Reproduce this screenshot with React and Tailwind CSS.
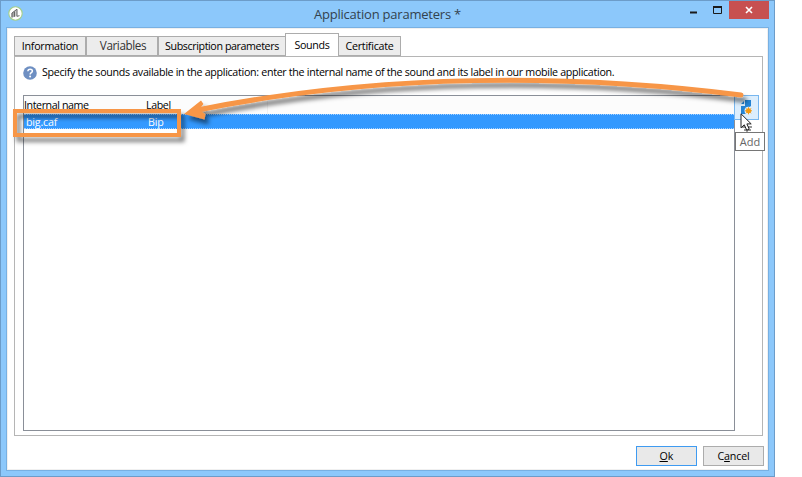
const tabs = [
  { label: 'Information', cls: 'w-[72px] h-[20px] bg-[#ececec] text-[10.7px] tracking-[-0.27px]' },
  { label: 'Variables', cls: 'w-[72px] h-[20px] bg-[#ececec] pl-[2px] text-[11.7px] text-[#333] tracking-[-0.4px]' },
  { label: 'Subscription parameters', cls: 'w-[128px] h-[20px] bg-[#ececec] text-[10.7px] tracking-[-0.4px]' },
  { label: 'Sounds', cls: 'relative w-[54px] h-[23px] -ml-px bg-white text-[10.7px] border-b-0! pt-px tracking-[-0.3px]' },
  { label: 'Certificate', cls: 'w-[63px] h-[20px] -ml-px bg-[#ececec] text-[10.7px] tracking-[-0.25px]' },
];

function TitleBar() {
  return (
    <header className="flex h-[26px] shrink-0 items-start pl-[7px]">
      <svg className="mt-[5px] shrink-0" width="15" height="15" viewBox="0 0 15 15">
        <circle cx="7.5" cy="7.5" r="6.7" fill="#fff" stroke="#a4cf8a" strokeWidth="1.1" />
        <path d="M3.5 7.2 6 5.5v5.6l-2.5.5z" fill="#aaa" />
        <path d="M6.1 5.3 9 3v7.5H6.2z" fill="#ccc" />
        <path d="M4 11.5V7L9 3.2v7.1l2.5-.6M6.5 5.5v5.3" fill="none" stroke="#666" strokeWidth="1" />
      </svg>
      <h1 className="flex-1 pl-[291px] pt-[3px] text-[13px] leading-[20px] tracking-[-0.22px] text-[#33424e]">Application parameters *</h1>
      <svg className="shrink-0" width="46" height="18" viewBox="0 0 46 18">
        <path d="M7 10.5h7v2H7z" fill="#1b1b1b" />
        <path d="M30.5 6h8v6.5h-8z" fill="none" stroke="#1b1b1b" />
        <path d="M30 5h9v2h-9z" fill="#1b1b1b" />
      </svg>
      <button className="mr-[5px] flex h-[18px] w-[40px] items-center justify-center bg-[#c75050]">
        <svg width="8" height="8" viewBox="0 0 8 8"><path d="M1 1l6 6M7 1L1 7" stroke="#fff" strokeWidth="1.6" /></svg>
      </button>
    </header>
  );
}

function Annotation() {
  return (
    <svg className="pointer-events-none absolute left-0 top-0" width="802" height="477" viewBox="0 0 802 477">
      <defs>
        <filter id="soft" x="-10%" y="-30%" width="120%" height="180%">
          <feDropShadow dx="3.5" dy="5" stdDeviation="2" floodColor="#000" floodOpacity=".5" />
        </filter>
      </defs>
      <g filter="url(#soft)">
        <path d="M15 111h164v24H15z" fill="none" stroke="#f79646" strokeWidth="4" />
      </g>
      <g filter="url(#soft)">
        <path d="M741 95C570 73.5 380 73 195 110.5" fill="none" stroke="#f79646" strokeWidth="5" strokeLinecap="round" />
        <path d="M184 114 201 100.5 203.5 104 199 109.5 205.5 114.5 204.5 119.5z" fill="#f79646" />
      </g>
    </svg>
  );
}

export default function App() {
  return (
    <div className="relative h-[477px] w-[802px] overflow-hidden bg-white font-['Open_Sans','Noto_Sans',sans-serif] text-[10.7px] text-black">
      <div className="flex h-[477px] w-[775px] flex-col border border-[#6c9cc9] bg-[#8cc8fb]">
        <TitleBar />
        <main className="mx-[5px] mb-[5px] flex flex-1 flex-col border border-[#78b0e2] bg-[#f0f0f0] p-px">
          <div className="flex flex-1 flex-col bg-white pl-[6px] pr-[3px] pt-[5px]">
            <nav className="flex h-[22px] items-end">
              {tabs.map((t) => (
                <div key={t.label} className={'z-10 flex shrink-0 items-center justify-center whitespace-nowrap border border-[#acacac] leading-none ' + t.cls}>{t.label}</div>
              ))}
            </nav>
            <section className="flex h-[380px] w-[749px] flex-col border border-[#b5b5b5] pl-[8px]">
              <div className="flex h-[38px] items-start pt-[9px]">
                <svg width="14" height="14" viewBox="0 0 14 14" className="shrink-0">
                  <circle cx="7" cy="7" r="6.8" fill="#6e8fc2" />
                  <path d="M4.9 5.3c0-3 4.5-2.7 4.5-.2 0 1.6-2.2 1.6-2.2 3.3" fill="none" stroke="#fff" strokeWidth="1.5" />
                  <circle cx="7.1" cy="10.6" r="1" fill="#fff" />
                </svg>
                <p className="ml-[5px] whitespace-nowrap leading-[13px] tracking-[-0.31px]">Specify the sounds available in the application: enter the internal name of the sound and its label in our mobile application.</p>
              </div>
              <div className="flex">
                <div className="h-[336px] w-[712px] border border-[#8a8f98]">
                  <div className="flex h-[18px] bg-[#fcfcfc] leading-[19px] tracking-[-0.42px]">
                    <span className="w-[122px]">Internal name</span>
                    <span className="w-[122px] border-r border-[#f0f0f0]">Label</span>
                  </div>
                  <div className="flex h-[15px] border-y border-dotted border-[#a5d1ff] bg-[#3399ff] pl-[2px] leading-[15px] tracking-[-0.2px] text-white">
                    <span className="w-[122px]">big.caf</span>
                    <span>Bip</span>
                  </div>
                </div>
                <button className="-ml-px flex h-[25px] w-[25px] items-start justify-center border border-[#78b7ef] bg-[#dceefd] pt-[4px]">
                  <svg width="14" height="15" viewBox="0 0 14 15">
                    <path d="M1 4 4 1v3zM5 0h6v6L8 8v6H1V6h4z" fill="#2484d5" />
                    <circle cx="8.5" cy="10.8" r="4" fill="#dceefd" />
                    <path d="M8.5 7.3v7M5 10.8h7M6 8.3l5 5M11 8.3l-5 5" stroke="#f49a12" strokeWidth="1" />
                    <circle cx="8.5" cy="10.8" r="2.5" fill="#f49a12" />
                  </svg>
                </button>
              </div>
            </section>
            <footer className="mt-[10px] flex justify-end gap-[6px]">
              <button className="h-[20px] w-[61px] border border-[#3f9bf1] bg-[#e9e9e9] leading-[18px]"><u>O</u>k</button>
              <button className="h-[20px] w-[61px] border border-[#acacac] bg-[#e9e9e9] leading-[18px] tracking-[-0.2px]">C<u>a</u>ncel</button>
            </footer>
          </div>
        </main>
      </div>
      <Annotation />
      <svg className="absolute left-[740px] top-[113px]" width="14" height="20" viewBox="0 0 14 20">
        <path d="M2 14h10M4 17h7M7 14v5" stroke="#777" strokeWidth="1.3" />
        <path d="M1 .8v14l3.3-3 2.4 5.4 2.5-1.1-2.3-5.2h4.3z" fill="#fff" stroke="#222" />
      </svg>
      <div className="absolute left-[735px] top-[132px] flex h-[19px] w-[30px] items-center justify-center border border-[#767676] bg-white pt-px text-[11px] text-[#666]">Add</div>
    </div>
  );
}
